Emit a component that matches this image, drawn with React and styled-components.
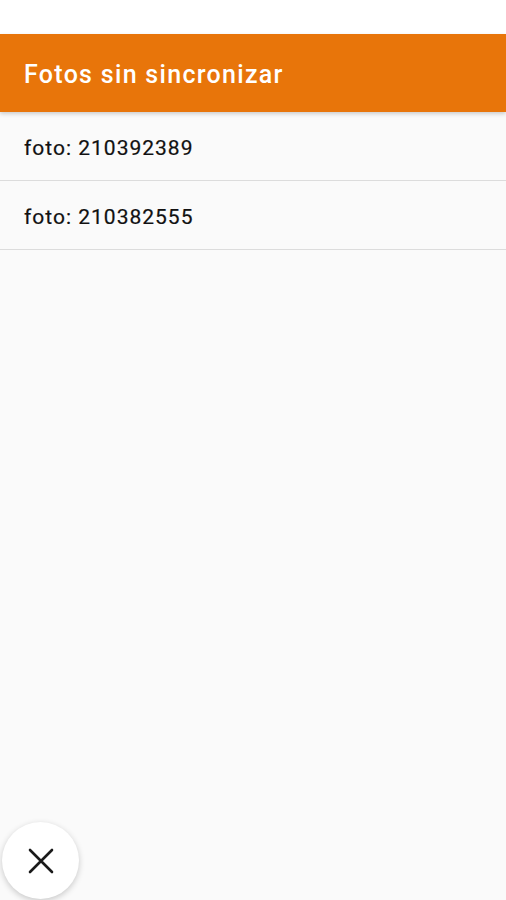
import React from 'react';
import styled, { createGlobalStyle } from 'styled-components';

const GlobalStyle = createGlobalStyle`
  html, body {
    margin: 0;
    padding: 0;
    background: #fafafa;
    font-family: Roboto, "Liberation Sans", sans-serif;
  }
`;

const Screen = styled.div`
  position: relative;
  display: flex;
  flex-direction: column;
  width: 506px;
  height: 900px;
  overflow: hidden;
  background: #fafafa;
`;

const StatusBar = styled.div`
  height: 34px;
  background: #ffffff;
`;

const Toolbar = styled.header`
  display: flex;
  align-items: center;
  height: 78px;
  padding: 0 24px;
  background: #e8750a;
  box-shadow: 0 2px 4px rgba(0, 0, 0, 0.18);
  position: relative;
  z-index: 1;
`;

const Title = styled.h1`
  margin: 0;
  padding-top: 2px;
  color: #ffffff;
  font-size: 25px;
  font-weight: 500;
  letter-spacing: 1.3px;
`;

const List = styled.ul`
  list-style: none;
  margin: 0;
  padding: 0;
`;

const Item = styled.li`
  display: flex;
  align-items: center;
  height: 68px;
  padding: 3px 24px 0;
  box-sizing: border-box;
  height: 69px;
  border-bottom: 1px solid #dcdcdc;
  color: #111111;
  font-size: 21px;
  letter-spacing: 1px;
  -webkit-text-stroke: 0.2px #111111;
`;

const Fab = styled.button`
  position: absolute;
  left: 2px;
  bottom: 1px;
  width: 77px;
  height: 77px;
  border: none;
  border-radius: 50%;
  background: #ffffff;
  box-shadow: 0 2px 6px rgba(0, 0, 0, 0.2);
  display: flex;
  align-items: center;
  justify-content: center;
  padding: 0;
`;

const photos = ['210392389', '210382555'];

const App = () => (
  <Screen>
    <GlobalStyle />
    <StatusBar />
    <Toolbar>
      <Title>Fotos sin sincronizar</Title>
    </Toolbar>
    <List>
      {photos.map((id) => (
        <Item key={id}>foto: {id}</Item>
      ))}
    </List>
    <Fab aria-label="cerrar">
      <svg width="26" height="26" viewBox="0 0 26 26">
        <path d="M2 2 L24 24 M24 2 L2 24" stroke="#1a1a1a" strokeWidth="2.6" strokeLinecap="round" />
      </svg>
    </Fab>
  </Screen>
);

export default App;
